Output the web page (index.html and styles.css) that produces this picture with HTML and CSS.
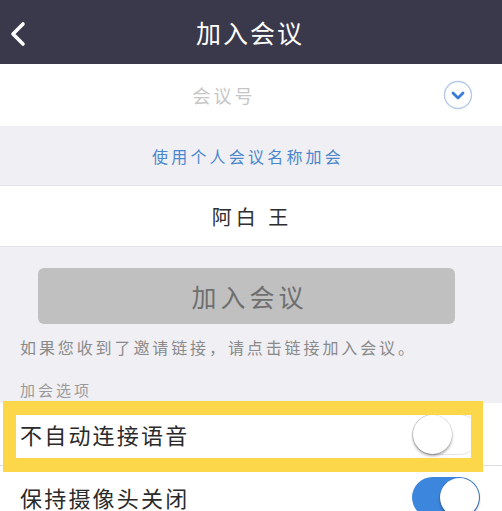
FILE: index.html
```html
<!DOCTYPE html>
<html lang="zh">
<head>
<meta charset="utf-8">
<title>加入会议</title>
<link rel="stylesheet" href="styles.css">
</head>
<body>
<div class="page">
  <header class="nav">
    <svg class="back" width="20" height="28" viewBox="0 0 20 28"><path d="M14 4 L4 14 L14 24" fill="none" stroke="#fff" stroke-width="3.6" stroke-linecap="round" stroke-linejoin="round"/></svg>
    <h1 class="title">加入会议</h1>
  </header>
  <div class="row input-row">
    <span class="placeholder">会议号</span>
    <svg class="drop" width="30" height="30" viewBox="0 0 30 30"><circle cx="15" cy="15" r="13.5" fill="#fff" stroke="#b6cbe6" stroke-width="1.4"/><path d="M10 13 L15 18 L20 13" fill="none" stroke="#3a7bd8" stroke-width="2.8" stroke-linecap="round" stroke-linejoin="round"/></svg>
  </div>
  <div class="link-band">使用个人会议名称加会</div>
  <div class="row name-row">阿白 王</div>
  <section class="gray">
    <div class="join-btn">加入会议</div>
    <p class="hint">如果您收到了邀请链接，请点击链接加入会议。</p>
    <p class="label">加会选项</p>
  </section>
  <div class="options">
    <div class="opt">
      <span class="opt-text">不自动连接语音</span>
      <span class="switch off"><span class="knob"></span></span>
    </div>
    <div class="opt">
      <span class="opt-text">保持摄像头关闭</span>
      <span class="switch on"><span class="knob"></span></span>
    </div>
    <div class="highlight"></div>
  </div>
</div>
</body>
</html>
```

FILE: styles.css
```css
* { box-sizing: border-box; }
html, body { margin: 0; padding: 0; }
body {
  width: 502px;
  height: 511px;
  overflow: hidden;
  background: #efeff4;
  font-family: "Noto Sans CJK SC", "Noto Sans", sans-serif;
}
.page { position: relative; }
.nav {
  height: 64px;
  background: #3a394c;
  display: flex;
  align-items: center;
  justify-content: center;
  position: relative;
}
.back { position: absolute; left: 9px; top: 20px; }
.title {
  margin: 0;
  color: #fff;
  font-size: 25px;
  font-weight: 400;
  letter-spacing: 2px;
  padding-right: 2px;
}
.row { background: #fff; display: flex; align-items: center; }
.input-row {
  height: 62px;
  justify-content: center;
  position: relative;
  padding-right: 54px;
}
.placeholder {
  color: #c6c6c6;
  font-size: 18px;
  letter-spacing: 3px;
}
.drop { position: absolute; right: 29px; top: 16px; }
.link-band {
  height: 60px;
  display: flex;
  align-items: center;
  justify-content: center;
  color: #4a87cc;
  font-size: 16px;
  letter-spacing: 3.2px;
  padding-right: 6px;
  border-bottom: 1px solid #e2e2e6;
}
.name-row {
  height: 61px;
  justify-content: center;
  color: #2e2e2e;
  font-size: 20px;
  letter-spacing: 4px;
  padding-left: 2px;
  border-bottom: 1px solid #e2e2e6;
}
.gray {
  padding: 21px 0 0 0;
  height: 156px;
}
.join-btn {
  margin: 0 47px 0 38px;
  height: 56px;
  border-radius: 6px;
  background: #c0c0c0;
  color: #6f6f6f;
  font-size: 25px;
  letter-spacing: 4px;
  padding-left: 6px;
  display: flex;
  align-items: center;
  justify-content: center;
}
.hint {
  margin: 12px 0 0 20px;
  color: #8a8a8a;
  font-size: 16px;
  letter-spacing: 2.9px;
  line-height: 22px;
}
.label {
  margin: 22px 0 0 20px;
  color: #9a9a9a;
  font-size: 15px;
  letter-spacing: 3px;
  line-height: 20px;
}
.options { position: relative; background: #fff; }
.opt {
  height: 63px;
  display: flex;
  align-items: center;
  justify-content: space-between;
  padding: 0 22px 0 20px;
  border-bottom: 1px solid #dcdce0;
}
.opt-text {
  font-size: 22px;
  letter-spacing: 2.2px;
  color: #2a2a2a;
}
.switch {
  width: 68px;
  height: 41px;
  border-radius: 21px;
  position: relative;
  display: block;
}
.switch.off { background: #fff; border: 1.5px solid #e3e3e8; }
.switch.on { background: #3d86de; }
.knob {
  position: absolute;
  top: 1px;
  width: 39px;
  height: 39px;
  border-radius: 50%;
  background: #fff;
  box-shadow: 0 2px 3px rgba(0,0,0,0.35), 0 0 0 0.5px rgba(0,0,0,0.12);
}
.switch.off .knob { left: 0; top: 0; }
.switch.on .knob { right: 1px; }
.highlight {
  position: absolute;
  left: 3px;
  top: -2px;
  width: 480px;
  height: 71px;
  border: solid #fbd749;
  border-width: 14px 12px 14px 13px;
  pointer-events: none;
}
```
